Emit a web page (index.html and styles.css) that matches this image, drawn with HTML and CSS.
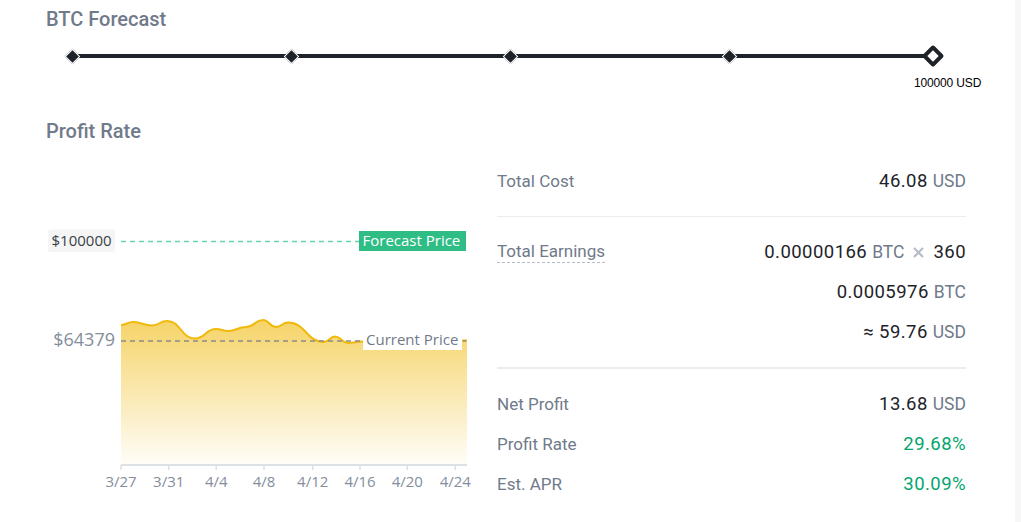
FILE: index.html
```html
<!DOCTYPE html>
<html>
<head>
<meta charset="utf-8">
<title>BTC Forecast</title>
<link rel="stylesheet" href="styles.css">
</head>
<body>
<div class="page">
  <main class="content">
    <h2 class="title">BTC Forecast</h2>
    <div class="slider">
      <div class="track"></div>
      <span class="mark m0"></span>
      <span class="mark m1"></span>
      <span class="mark m2"></span>
      <span class="mark m3"></span>
      <span class="handle"></span>
      <span class="handle-label">100000 USD</span>
    </div>
    <h2 class="title title-profit">Profit Rate</h2>
    <section class="result">
      <svg class="chart" width="434" height="340" viewBox="46 160 434 340" xmlns="http://www.w3.org/2000/svg">
        <defs>
          <linearGradient id="areaFill" x1="0" y1="320" x2="0" y2="464" gradientUnits="userSpaceOnUse">
            <stop offset="0" stop-color="#F0B90B" stop-opacity="0.62"/>
            <stop offset="1" stop-color="#F0B90B" stop-opacity="0.03"/>
          </linearGradient>
        </defs>
        <path class="area" d="M121,325 C127,325 127,322 133,322 C142.5,322 142.5,325.5 152,325.5 C159.5,325.5 159.5,321 167,321 C181,321 181,338.5 195,338.5 C205.5,338.5 205.5,329 216,329 C222,329 222,331 228,331 C237,331 237,327 246,327 C254.5,327 254.5,320 263,320 C269.5,320 269.5,327 276,327 C282,327 282,322.5 288,322.5 C306,322.5 306,342 324,342 C329.5,342 329.5,336.5 335,336.5 C341.5,336.5 341.5,343 348,343 C355,343 355,341.5 362,341.5 L467,340.5 L467,464 L121,464 Z"/>
        <path class="line" d="M121,325 C127,325 127,322 133,322 C142.5,322 142.5,325.5 152,325.5 C159.5,325.5 159.5,321 167,321 C181,321 181,338.5 195,338.5 C205.5,338.5 205.5,329 216,329 C222,329 222,331 228,331 C237,331 237,327 246,327 C254.5,327 254.5,320 263,320 C269.5,320 269.5,327 276,327 C282,327 282,322.5 288,322.5 C306,322.5 306,342 324,342 C329.5,342 329.5,336.5 335,336.5 C341.5,336.5 341.5,343 348,343 C355,343 355,341.5 362,341.5 L467,340.5"/>
        <line class="dash-current" x1="121" y1="341" x2="466" y2="341"/>
        <rect class="box-current" x="363" y="330" width="99" height="20"/>
        <text class="txt-current" x="366" y="345">Current Price</text>
        <text class="txt-price" x="115" y="346">$64379</text>

        <line class="dash-forecast" x1="121" y1="241.5" x2="359" y2="241.5"/>
        <rect class="box-forecast" x="359" y="231" width="107" height="20"/>
        <text class="txt-forecast" x="362.5" y="245.5">Forecast Price</text>
        <rect class="box-target" x="48" y="229.5" width="67" height="22.5" rx="3"/>
        <text class="txt-target" x="51.5" y="245.5">$100000</text>

        <line class="axis" x1="121" y1="465" x2="467" y2="465"/>
        <line class="tick" x1="121" y1="465" x2="121" y2="470"/>
        <line class="tick" x1="168.7" y1="465" x2="168.7" y2="470"/>
        <line class="tick" x1="216.3" y1="465" x2="216.3" y2="470"/>
        <line class="tick" x1="264" y1="465" x2="264" y2="470"/>
        <line class="tick" x1="312.7" y1="465" x2="312.7" y2="470"/>
        <line class="tick" x1="360" y1="465" x2="360" y2="470"/>
        <line class="tick" x1="407.3" y1="465" x2="407.3" y2="470"/>
        <line class="tick" x1="455.3" y1="465" x2="455.3" y2="470"/>
        <text class="ax" x="121" y="486.5">3/27</text>
        <text class="ax" x="168.7" y="486.5">3/31</text>
        <text class="ax" x="216.3" y="486.5">4/4</text>
        <text class="ax" x="264" y="486.5">4/8</text>
        <text class="ax" x="312.7" y="486.5">4/12</text>
        <text class="ax" x="360" y="486.5">4/16</text>
        <text class="ax" x="407.3" y="486.5">4/20</text>
        <text class="ax" x="455.3" y="486.5">4/24</text>
      </svg>

      <div class="summary">
        <div class="row">
          <span class="label">Total Cost</span>
          <span class="value"><span class="num">46.08</span><span class="unit">USD</span></span>
        </div>
        <div class="divider"></div>
        <div class="row">
          <span class="label label-tip">Total Earnings</span>
          <span class="value"><span class="num">0.00000166</span><span class="unit">BTC</span><svg class="times" width="13" height="13" viewBox="0 0 13 13"><path d="M2 2 L11 11 M11 2 L2 11"/></svg><span class="num">360</span></span>
        </div>
        <div class="row row-end">
          <span class="value"><span class="num">0.0005976</span><span class="unit">BTC</span></span>
        </div>
        <div class="row row-end">
          <span class="value"><span class="num">≈ 59.76</span><span class="unit">USD</span></span>
        </div>
        <div class="divider divider-thick"></div>
        <div class="row">
          <span class="label">Net Profit</span>
          <span class="value"><span class="num">13.68</span><span class="unit">USD</span></span>
        </div>
        <div class="row">
          <span class="label">Profit Rate</span>
          <span class="value"><span class="num green">29.68%</span></span>
        </div>
        <div class="row">
          <span class="label">Est. APR</span>
          <span class="value"><span class="num green">30.09%</span></span>
        </div>
      </div>
    </section>
  </main>
  <div class="scroll-track"></div>
</div>
</body>
</html>
```

FILE: styles.css
```css
* { box-sizing: border-box; }
html, body { margin: 0; padding: 0; background: #fff; }
body {
  font-family: Roboto, "Liberation Sans", Arial, sans-serif;
  color: #1E2329;
}
.page {
  display: flex;
  width: 1021px;
  height: 522px;
  overflow: hidden;
}
.content {
  flex: 1;
  padding: 7px 0 0 46px;
}
.scroll-track {
  width: 6px;
  background: #F7F7F7;
}
.title {
  margin: 0;
  font-size: 20px;
  line-height: 24px;
  font-weight: 500;
  color: #707A8A;
}
.title-profit { margin-top: 24px; }

/* slider */
.slider {
  position: relative;
  width: 861px;
  height: 64px;
  margin-left: 26px;
  padding-top: 23px;
}
.track {
  height: 4px;
  background: #1E2329;
}
.mark {
  position: absolute;
  top: 19.5px;
  width: 11px;
  height: 11px;
  background: #1E2329;
  border: 1px solid #fff;
  transform: rotate(45deg);
}
.m0 { left: -5.5px; }
.m1 { left: 213.5px; }
.m2 { left: 432.5px; }
.m3 { left: 651.5px; }
.handle {
  position: absolute;
  left: 853px;
  top: 17px;
  width: 16px;
  height: 16px;
  background: #fff;
  border: 4px solid #1E2329;
  border-radius: 2px;
  transform: rotate(45deg);
}
.handle-label {
  position: absolute;
  left: 842px;
  top: 45px;
  font-family: "Liberation Sans", Arial, sans-serif;
  font-size: 12px;
  line-height: 14px;
  letter-spacing: -0.15px;
  color: #000;
  white-space: nowrap;
}

/* result */
.result {
  display: flex;
  margin-top: 17px;
}
.chart { display: block; flex: none; }
.area { fill: url(#areaFill); }
.line { fill: none; stroke: #F0B90B; stroke-width: 2; stroke-linejoin: round; }
.dash-current { stroke: #8C8C8C; stroke-width: 1.5; stroke-dasharray: 5 4; }
.dash-forecast { stroke: #6AD2AB; stroke-width: 1.5; stroke-dasharray: 5 4; }
.box-current { fill: #fff; }
.box-forecast { fill: #2EBD85; }
.box-target { fill: #F5F5F5; }
.chart text { font-family: "Open Sans", "Noto Sans", sans-serif; }
.txt-current { font-size: 15px; fill: #707A8A; }
.txt-forecast { font-size: 15px; fill: #fff; }
.txt-target { font-size: 15px; fill: #3A3F47; }
.txt-price { font-size: 18px; fill: #848E9C; text-anchor: end; }
.axis { stroke: #DDE0E4; stroke-width: 2; }
.tick { stroke: #DDE0E4; stroke-width: 1.5; }
.ax { font-size: 15px; fill: #848E9C; text-anchor: middle; }

.summary {
  width: 469px;
  margin-left: 17px;
  padding-top: 1px;
}
.row {
  display: flex;
  justify-content: space-between;
  align-items: center;
  height: 40px;
}
.row-end { justify-content: flex-end; }
.label {
  font-size: 17px;
  color: #707A8A;
}
.label-tip {
  line-height: 20px;
  padding-bottom: 1px;
  border-bottom: 1px dashed #B7BDC6;
}
.value {
  display: flex;
  align-items: baseline;
  gap: 5px;
  font-size: 17.5px;
}
.num { color: #1E2329; font-size: 18.5px; letter-spacing: 0.45px; }
.unit { color: #707A8A; }
.green { color: #03A66D; }
.times {
  align-self: center;
  margin: 0 3px;
  fill: none;
  stroke: #B7BDC6;
  stroke-width: 2.2;
}
.divider {
  height: 1px;
  background: #EAECEF;
  margin: 15px 0;
}
.divider-thick { height: 2px; }
```
